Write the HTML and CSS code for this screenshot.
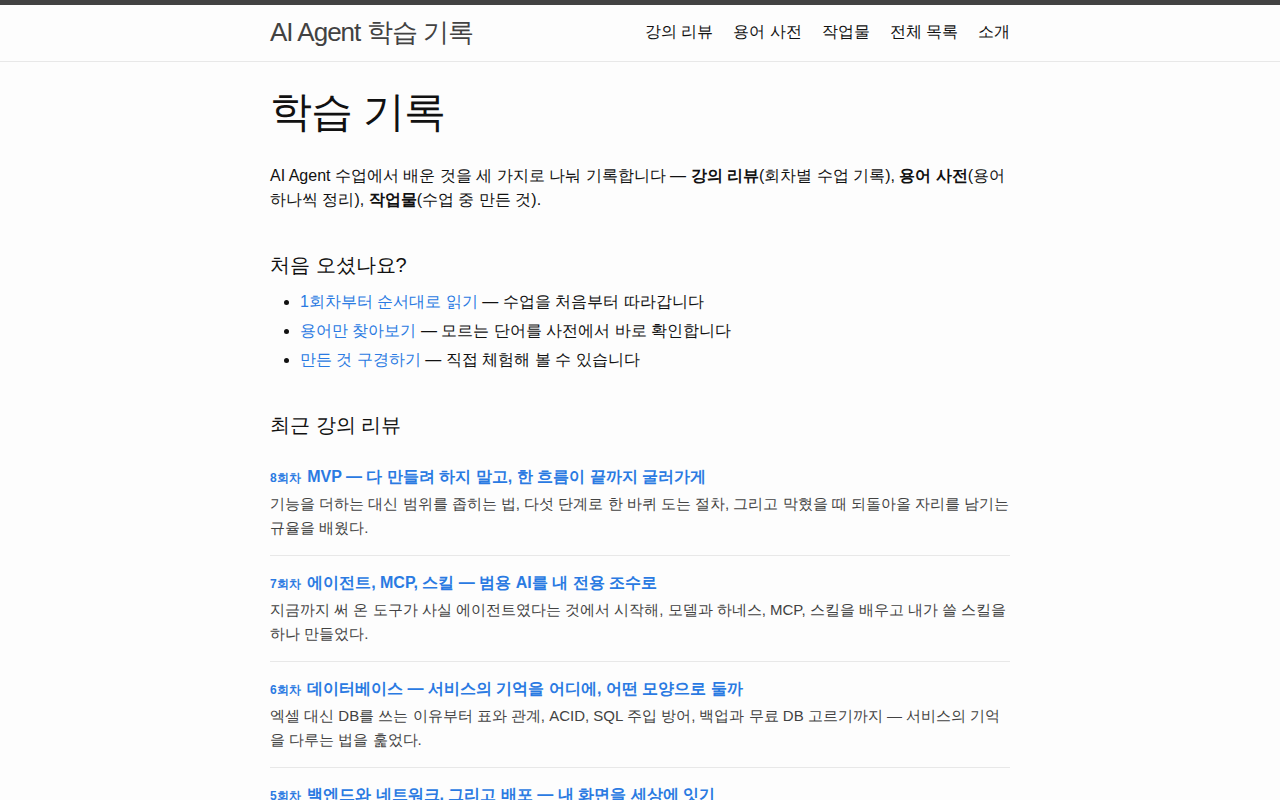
FILE: index.html
```html
<!DOCTYPE html>
<html lang="ko">
<head>
<meta charset="utf-8">
<title>AI Agent 학습 기록</title>
<link rel="stylesheet" href="styles.css">
</head>
<body>
<header class="site-header">
  <div class="wrapper header-inner">
    <a class="site-title" href="#">AI Agent 학습 기록</a>
    <nav class="site-nav">
      <a class="page-link" href="#">강의 리뷰</a>
      <a class="page-link" href="#">용어 사전</a>
      <a class="page-link" href="#">작업물</a>
      <a class="page-link" href="#">전체 목록</a>
      <a class="page-link" href="#">소개</a>
    </nav>
  </div>
</header>
<main class="page-content">
  <div class="wrapper">
    <h1 class="page-heading">학습 기록</h1>
    <p class="intro">AI Agent 수업에서 배운 것을 세 가지로 나눠 기록합니다 — <strong>강의 리뷰</strong>(회차별 수업 기록), <strong>용어 사전</strong>(용어 하나씩 정리), <strong>작업물</strong>(수업 중 만든 것).</p>

    <h2 class="section-title first">처음 오셨나요?</h2>
    <ul class="start-list">
      <li><a href="#">1회차부터 순서대로 읽기</a> — 수업을 처음부터 따라갑니다</li>
      <li><a href="#">용어만 찾아보기</a> — 모르는 단어를 사전에서 바로 확인합니다</li>
      <li><a href="#">만든 것 구경하기</a> — 직접 체험해 볼 수 있습니다</li>
    </ul>

    <h2 class="section-title">최근 강의 리뷰</h2>
    <ul class="post-list">
      <li class="post-item">
        <div class="post-head"><span class="post-num">8회차</span> <a class="post-link" href="#">MVP — 다 만들려 하지 말고, 한 흐름이 끝까지 굴러가게</a></div>
        <p class="post-desc">기능을 더하는 대신 범위를 좁히는 법, 다섯 단계로 한 바퀴 도는 절차, 그리고 막혔을 때 되돌아올 자리를 남기는 규율을 배웠다.</p>
      </li>
      <li class="post-item">
        <div class="post-head"><span class="post-num">7회차</span> <a class="post-link" href="#">에이전트, MCP, 스킬 — 범용 AI를 내 전용 조수로</a></div>
        <p class="post-desc">지금까지 써 온 도구가 사실 에이전트였다는 것에서 시작해, 모델과 하네스, MCP, 스킬을 배우고 내가 쓸 스킬을 하나 만들었다.</p>
      </li>
      <li class="post-item">
        <div class="post-head"><span class="post-num">6회차</span> <a class="post-link" href="#">데이터베이스 — 서비스의 기억을 어디에, 어떤 모양으로 둘까</a></div>
        <p class="post-desc">엑셀 대신 DB를 쓰는 이유부터 표와 관계, ACID, SQL 주입 방어, 백업과 무료 DB 고르기까지 — 서비스의 기억을 다루는 법을 훑었다.</p>
      </li>
      <li class="post-item">
        <div class="post-head"><span class="post-num">5회차</span> <a class="post-link" href="#">백엔드와 네트워크, 그리고 배포 — 내 화면을 세상에 잇기</a></div>
        <p class="post-desc">브라우저와 서버가 주고받는 요청과 응답, API, 그리고 내가 만든 화면을 인터넷에 올리는 배포 과정을 따라가 보았다.</p>
      </li>
    </ul>
  </div>
</main>
</body>
</html>
```

FILE: styles.css
```css
* { box-sizing: border-box; }

html, body {
  margin: 0;
  padding: 0;
}

body {
  background: #fdfdfd;
  color: #111;
  font-family: "Liberation Sans", Arial, sans-serif;
  font-size: 16px;
  line-height: 1.5;
}

a { text-decoration: none; color: #2a7ae2; }

.wrapper {
  max-width: 740px;
  margin: 0 auto;
}

.site-header {
  border-top: 5px solid #424242;
  border-bottom: 1px solid #e8e8e8;
  min-height: 56px;
}

.header-inner {
  height: 56px;
  display: flex;
  align-items: flex-start;
  justify-content: space-between;
}

.site-title {
  font-size: 26px;
  font-weight: 300;
  letter-spacing: -1px;
  line-height: 54px;
  color: #424242;
}

.site-nav {
  display: flex;
  gap: 20px;
  line-height: 54px;
}

.page-link {
  color: #111;
  font-size: 16px;
}

.page-content {
  padding-top: 27px;
  padding-bottom: 30px;
}

.page-heading {
  font-size: 42px;
  font-weight: 400;
  line-height: 1.1;
  margin: 0 0 29px;
  letter-spacing: -1px;
}

.intro {
  margin: 0 0 15px;
  line-height: 24px;
}

.section-title {
  font-size: 20px;
  font-weight: 400;
  line-height: 25px;
  margin: 41px 0 12px;
}

.start-list {
  margin: 0;
  padding-left: 30px;
}

.start-list li {
  line-height: 24px;
  margin-bottom: 5px;
}

.post-list {
  list-style: none;
  margin: 11px 0 0;
  padding: 0;
}

.post-item {
  padding: 15px 0 15px;
  border-bottom: 1px solid #e8e8e8;
}

.post-head {
  line-height: 24px;
  color: #2a7ae2;
}

.post-num {
  font-size: 12px;
  font-weight: 700;
  color: #2a7ae2;
  margin-right: 2px;
}

.post-link {
  font-size: 16px;
  font-weight: 700;
}

.post-desc {
  margin: 2px 0 0;
  font-size: 15px;
  line-height: 24px;
  color: #424242;
}
```
